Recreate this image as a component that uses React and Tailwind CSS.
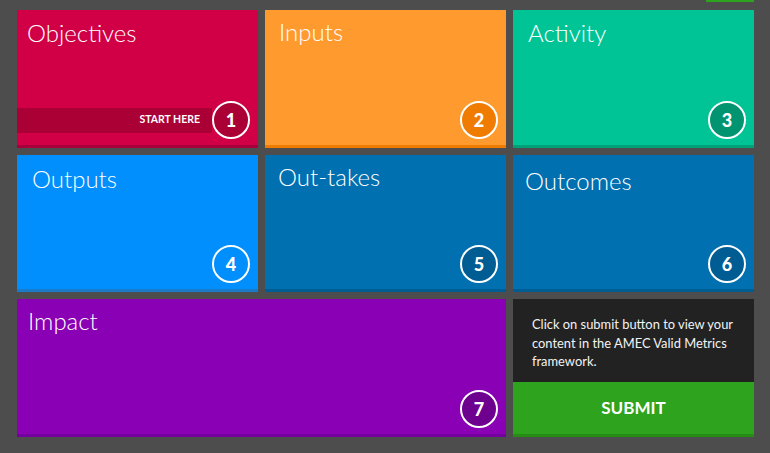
const tiles = [
  { n: 1, title: "Objectives", bg: "bg-[#d10046]", edge: "border-[#a8003b]", ring: "bg-[#ab0036]", pad: "pl-[10px] pt-[11px]", start: true },
  { n: 2, title: "Inputs", bg: "bg-[#ff9a2f]", edge: "border-[#ef7c00]", ring: "bg-[#ef7c00]", pad: "pl-[14px] pt-[10px]" },
  { n: 3, title: "Activity", bg: "bg-[#00c495]", edge: "border-[#00a078]", ring: "bg-[#009470]", pad: "pl-[15px] pt-[11px]" },
  { n: 4, title: "Outputs", bg: "bg-[#008ffd]", edge: "border-[#1a7cc8]", ring: "bg-[#008ffd]", pad: "pl-[15px] pt-[12px]" },
  { n: 5, title: "Out-takes", bg: "bg-[#0070b0]", edge: "border-[#005d94]", ring: "bg-[#005d93]", pad: "pl-[13px] pt-[10px]" },
  { n: 6, title: "Outcomes", bg: "bg-[#0070b0]", edge: "border-[#005d94]", ring: "bg-[#005d93]", pad: "pl-[12px] pt-[14px]" },
];

const font = { fontFamily: "Lato, 'Open Sans', sans-serif" };

function Badge({ n, ring }) {
  return (
    <div className={`w-[38px] h-[38px] rounded-full border-2 border-white ${ring} flex items-center justify-center text-white font-black text-[18px] leading-none shrink-0`}>
      {n}
    </div>
  );
}

function Tile({ t, wide }) {
  return (
    <div className={`${t.bg} ${t.edge} border-b-[3px] flex flex-col justify-between ${wide ? "col-span-2" : ""}`}>
      <div className={`${t.pad} text-white font-light text-[24px] leading-[24px]`}>{t.title}</div>
      <div className="flex items-center justify-end pr-[8px] pb-[6px]">
        {t.start && (
          <div className={`flex-1 h-[25px] ${t.ring} flex items-center justify-end pr-[12px] text-white font-bold text-[10.5px]`}>
            START HERE
          </div>
        )}
        <Badge n={t.n} ring={t.ring} />
      </div>
    </div>
  );
}

export default function App() {
  return (
    <div className="w-[770px] h-[453px] bg-[#4d4d4d] overflow-hidden" style={font}>
      <div className="flex justify-end pr-[16px]">
        <div className="w-[48px] h-[2px] bg-[#2ea31e]" />
      </div>
      <div className="grid grid-cols-[241px_241px_241px] grid-rows-[138px_137px_138px] gap-x-[7px] gap-y-[7px] pl-[17px] pt-[8px]">
        {tiles.map((t) => (
          <Tile key={t.n} t={t} />
        ))}
        <Tile
          wide
          t={{ n: 7, title: "Impact", bg: "bg-[#8a00b4]", edge: "border-[#7400a0]", ring: "bg-[#6d008f]", pad: "pl-[11px] pt-[10px]" }}
        />
        <div className="flex flex-col">
          <div className="h-[83px] bg-[#222222] pl-[19px] pr-[8px] pt-[16px] text-[12.9px] leading-[18.5px] text-[#f2f2f2]">
            Click on submit button to view your content in the AMEC Valid Metrics framework.
          </div>
          <button className="flex-1 bg-[#2ea31e] border-b-[3px] border-[#268c16] text-white font-bold text-[17px] flex items-center justify-center">
            SUBMIT
          </button>
        </div>
      </div>
    </div>
  );
}
